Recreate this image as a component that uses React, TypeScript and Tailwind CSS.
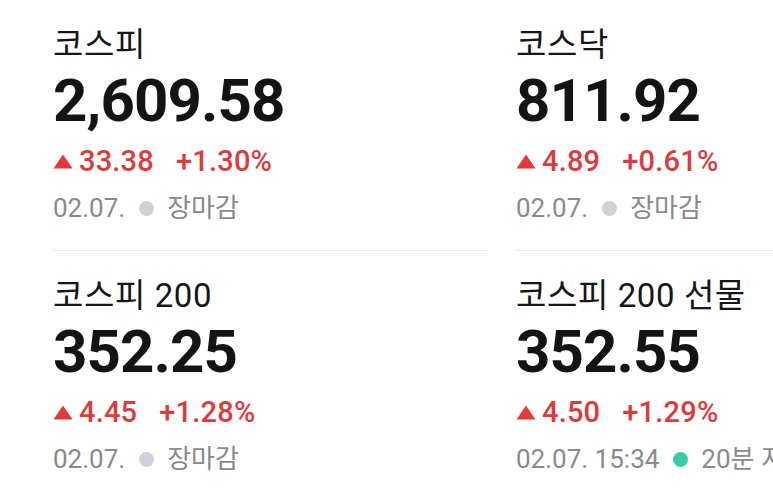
import type { ReactNode } from "react";

interface IndexItem {
	name: string;
	value: string;
	change: string;
	rate: string;
	time: string;
	status: string;
	live?: boolean;
}

const items: IndexItem[] = [
	{ name: "코스피", value: "2,609.58", change: "33.38", rate: "+1.30%", time: "02.07.", status: "장마감" },
	{ name: "코스닥", value: "811.92", change: "4.89", rate: "+0.61%", time: "02.07.", status: "장마감" },
	{ name: "코스피 200", value: "352.25", change: "4.45", rate: "+1.28%", time: "02.07.", status: "장마감" },
	{ name: "코스피 200 선물", value: "352.55", change: "4.50", rate: "+1.29%", time: "02.07. 15:34", status: "20분 지연", live: true },
];

function UpTriangle() {
	return (
		<svg width="20" height="15" viewBox="0 0 20 15" className="mr-[6px] shrink-0">
			<path d="M10 0.5 L19.5 14.5 L0.5 14.5 Z" fill="#e5383b" />
		</svg>
	);
}

function Cell({ item, bordered }: { item: IndexItem; bordered: boolean }): ReactNode {
	return (
		<div className={`pt-[27px] pb-[26px] ${bordered ? "border-b border-[#ececec]" : ""}`}>
			<p className="whitespace-nowrap text-[33px] leading-[36px] tracking-[0.6px] text-[#161616]">{item.name}</p>
			<p className="mt-[8px] whitespace-nowrap text-[60px] font-bold leading-[60px] tracking-[-0.9px] text-[#141414]">
				{item.value}
			</p>
			<div className="mt-[14px] flex items-center whitespace-nowrap text-[29px] font-medium leading-[32px] tracking-[0.2px] text-[#dd3a3e]">
				<UpTriangle />
				<span>{item.change}</span>
				<span className="ml-[22px]">{item.rate}</span>
			</div>
			<div className="mt-[15px] flex items-center whitespace-nowrap text-[26px] leading-[32px] text-[#8a8a8a]">
				<span>{item.time}</span>
				<span
					className={`ml-[14px] mr-[13px] inline-block size-[15px] shrink-0 rounded-full ${
						item.live ? "bg-[#3ccaa6]" : "bg-[#cdd1da]"
					}`}
				/>
				<span>{item.status}</span>
			</div>
		</div>
	);
}

export default function App() {
	return (
		<div
			className="h-[493px] w-[773px] overflow-hidden bg-white"
			style={{ fontFamily: "Roboto, 'Noto Sans CJK KR', sans-serif" }}
		>
			<div className="grid grid-cols-[436px_436px] gap-x-[27px] pl-[53px]">
				{items.map((item, index) => (
					<Cell key={item.name} item={item} bordered={index < 2} />
				))}
			</div>
		</div>
	);
}
